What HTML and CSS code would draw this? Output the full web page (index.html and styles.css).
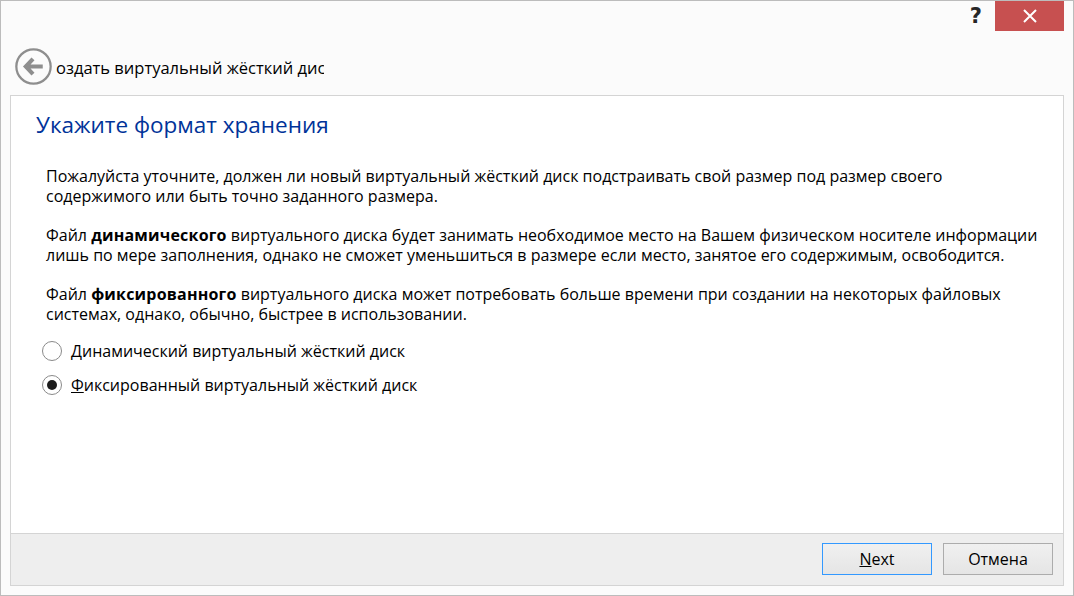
FILE: index.html
```html
<!DOCTYPE html>
<html lang="ru">
<head>
<meta charset="utf-8">
<title>Создать виртуальный жёсткий диск</title>
<link rel="stylesheet" href="styles.css">
</head>
<body>
<div class="window">
  <div class="titlebar">
    <span class="help">?</span>
    <div class="close">
      <svg width="14" height="14" viewBox="0 0 14 14"><path d="M1 1 L13 13 M13 1 L1 13" stroke="#fff" stroke-width="2" fill="none"/></svg>
    </div>
  </div>
  <div class="navbar">
    <svg class="back" width="37" height="37" viewBox="0 0 36 36">
      <circle cx="18" cy="18" r="16.7" fill="#fbfbfb" stroke="#8e8e8e" stroke-width="2.2"/>
      <path d="M17.5 10.5 L10.5 18 L17.5 25.5 M11 18 H27" fill="none" stroke="#8e8e8e" stroke-width="4"/>
    </svg>
    <div class="wizard-title">оздать виртуальный жёсткий диск</div>
  </div>
  <div class="panel">
    <div class="content">
      <h1 class="heading">Укажите формат хранения</h1>
      <div class="body">
        <p class="para">Пожалуйста уточните, должен ли новый виртуальный жёсткий диск подстраивать свой размер под размер своего<br>содержимого или быть точно заданного размера.</p>
        <p class="para">Файл <b>динамического</b> виртуального диска будет занимать необходимое место на Вашем физическом носителе информации<br>лишь по мере заполнения, однако не сможет уменьшиться в размере если место, занятое его содержимым, освободится.</p>
        <p class="para">Файл <b>фиксированного</b> виртуального диска может потребовать больше времени при создании на некоторых файловых<br>системах, однако, обычно, быстрее в использовании.</p>
      </div>
      <div class="options">
        <div class="option"><span class="radio"></span><span class="label"><u>Д</u>инамический виртуальный жёсткий диск</span></div>
        <div class="option"><span class="radio checked"></span><span class="label"><u>Ф</u>иксированный виртуальный жёсткий диск</span></div>
      </div>
    </div>
    <div class="footer">
      <button class="btn primary"><u>N</u>ext</button>
      <button class="btn">Отмена</button>
    </div>
  </div>
</div>
</body>
</html>
```

FILE: styles.css
```css
* { box-sizing: border-box; }
html, body { margin: 0; padding: 0; }
body {
  width: 1074px;
  height: 596px;
  overflow: hidden;
  font-family: "Open Sans", "Noto Sans", sans-serif;
  font-size: 16px;
  color: #000;
}
.window {
  width: 1074px;
  height: 596px;
  background: #fbfbfb;
  border: 1px solid #bcbcbc;
  display: flex;
  flex-direction: column;
  padding: 0 9px 9px;
}
.titlebar {
  height: 30px;
  display: flex;
  justify-content: flex-end;
  align-items: flex-start;
}
.help {
  font-family: "DejaVu Sans", sans-serif;
  font-weight: 700;
  font-size: 21px;
  line-height: 30px;
  color: #262626;
  margin-right: 13px;
}
.close {
  width: 69px;
  height: 30px;
  background: #c75050;
  display: flex;
  align-items: center;
  justify-content: center;
}
.navbar {
  height: 64px;
  display: flex;
  align-items: flex-start;
  padding: 17px 0 0 5px;
}
.back { flex: none; }
.wizard-title {
  width: 268px;
  overflow: hidden;
  white-space: nowrap;
  font-size: 16.5px;
  line-height: 39px;
  margin-left: 4px;
}
.panel {
  flex: 1;
  display: flex;
  flex-direction: column;
  background: #fff;
  border: 1px solid #d4d4d4;
}
.content { flex: 1; padding: 14px 25px 0 25px; }
.heading {
  margin: 0;
  font-size: 22.5px;
  font-weight: 400;
  line-height: 30px;
  color: #003399;
}
.body { padding: 26px 0 0 10px; }
.para { margin: 0 0 19px; line-height: 20px; white-space: nowrap; }
.para b { letter-spacing: 0.2px; }
.options { padding: 0 0 0 6px; margin-top: -2px; display: flex; flex-direction: column; gap: 14px; }
.option { display: flex; align-items: center; height: 20px; gap: 9px; }
.radio {
  width: 20px;
  height: 20px;
  border-radius: 50%;
  border: 1px solid #8a8a8a;
  background: #fff;
  display: flex;
  align-items: center;
  justify-content: center;
  margin-top: -1px;
}
.radio.checked::after {
  content: "";
  width: 10px;
  height: 10px;
  border-radius: 50%;
  background: #1c1c1c;
}
.footer {
  height: 52px;
  background: #eeeeee;
  border-top: 1px solid #d4d4d4;
  display: flex;
  justify-content: flex-end;
  align-items: flex-start;
  gap: 11px;
  padding: 9px 10px 0 0;
}
.btn {
  width: 110px;
  height: 32px;
  font: inherit;
  color: #000;
  background: linear-gradient(#f0f0f0, #e5e5e5);
  border: 1px solid #acacac;
  padding: 0;
}
.btn.primary { border-color: #3399ff; }
```
